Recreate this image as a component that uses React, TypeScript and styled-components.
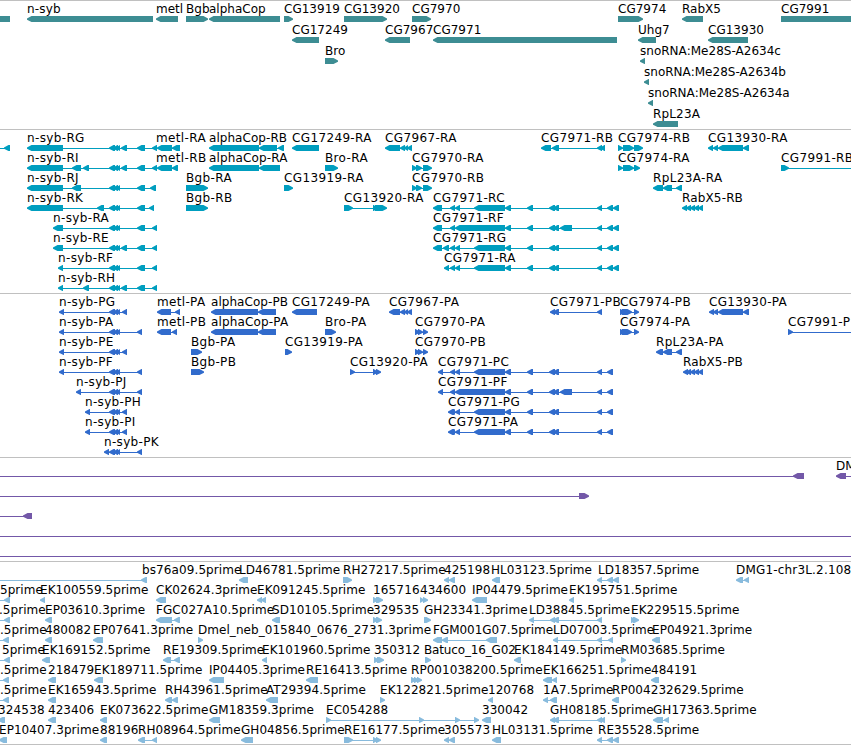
import React from 'react';
import styled, {createGlobalStyle} from 'styled-components';

type Exon = [number, number];
type Strand = '+' | '-';

// label, label offset, strand, exons, optional start / end of the connecting line
interface Feature {
	label: string;
	x: number;
	strand: Strand;
	exons: Exon[];
	from?: number;
	to?: number;
	spacing?: number;
}

interface TrackData {
	name: string;
	color: string;
	gap: number;
	bottom: number;
	spacing: number;
	rows: Feature[][];
}

const GLYPH_HEIGHT = 6;
const HEAD = 4.5;
const OFF_RIGHT = 860;

const f = (label: string, strand: Strand, exons: Exon[], extra: Partial<Feature> = {}): Feature => ({
	label,
	strand,
	exons,
	x: exons.length ? exons[0][0] : 0,
	...extra
});

const mid: Exon[] = [[109, 115], [113, 118], [116, 120]];
const cgTail: Exon[] = [[505, 511], [527, 533], [549, 555], [553, 559]];
const rEnd: Exon[] = [[597, 602], [607, 613], [613, 619]];
const pEnd: Exon[] = [[597, 602], [607, 613]];
const rab: Exon[] = [[686, 691], [690, 695], [694, 699], [698, 703]];
const cg79: Exon[] = [[400, 405], [404, 408], [407, 412]];

const tracks: TrackData[] = [
	{
		name: 'Gene',
		color: '#3d8d93',
		gap: 1,
		bottom: 2,
		spacing: 0.02,
		rows: [
			[
				f('', '-', [[-10, 10]]),
				f('n-syb', '-', [[27, 153]], {spacing: 0.2}),
				f('metl', '-', [[156, 178]]),
				f('Bgb', '+', [[186, 208]]),
				f('alphaCop', '-', [[209, 280]]),
				f('CG13919', '+', [[284, 293]]),
				f('CG13920', '+', [[344, 387]]),
				f('CG7970', '+', [[412, 431]]),
				f('CG7974', '+', [[618, 643]]),
				f('RabX5', '-', [[682, 703]]),
				f('CG7991', '+', [[781, OFF_RIGHT]])
			],
			[
				f('CG17249', '-', [[292, 319]]),
				f('CG7967', '-', [[385, 410]]),
				f('CG7971', '-', [[433, 617]]),
				f('Uhg7', '-', [[638, 656]]),
				f('CG13930', '-', [[708, 748]])
			],
			[f('Bro', '+', [[325, 338]]), f('snoRNA:Me28S-A2634c', '-', [[640, 645]])],
			[f('snoRNA:Me28S-A2634b', '-', [[644, 649]])],
			[f('snoRNA:Me28S-A2634a', '-', [[648, 653]])],
			[f('RpL23A', '-', [[653, 678]], {spacing: 0.15})]
		]
	},
	{
		name: 'mRNA',
		color: '#009ebf',
		gap: 0,
		bottom: 2,
		spacing: 0.36,
		rows: [
			[
				f('', '-', [[4, 10]], {from: -10}),
				f('n-syb-RG', '-', [[27, 63], ...mid, [121, 127], [137, 145], [152, 157]]),
				f('metl-RA', '-', [[157, 172], [172, 180]], {x: 156}),
				f('alphaCop-RB', '-', [[209, 259], [259, 277], [278, 284]], {spacing: 0.05}),
				f('CG17249-RA', '-', [[292, 319]]),
				f('CG7967-RA', '-', [[385, 400], ...cg79]),
				f('CG7971-RB', '-', [[541, 551], [552, 559], [597, 602], [600, 605]]),
				f('CG7974-RB', '+', [[618, 623], [623, 634], [634, 643]]),
				f('CG13930-RA', '-', [[708, 713], [713, 718], [718, 743], [743, 749]])
			],
			[
				f('n-syb-RI', '-', [[27, 63], [72, 81], [83, 89], ...mid, [121, 127], [137, 145], [152, 157]]),
				f('metl-RB', '-', [[157, 172], [172, 178]], {x: 156}),
				f('alphaCop-RA', '-', [[209, 259], [259, 280]], {spacing: 0.15}),
				f('Bro-RA', '+', [[325, 338]]),
				f('CG7970-RA', '+', [[412, 417], [416, 422], [423, 432]]),
				f('CG7974-RA', '+', [[618, 623], [623, 634], [634, 640]]),
				f('CG7991-RB', '+', [[781, 789]], {to: OFF_RIGHT})
			],
			[
				f('n-syb-RJ', '-', [[27, 63], [72, 81], ...mid, [137, 145], [150, 156]]),
				f('Bgb-RA', '+', [[186, 208]]),
				f('CG13919-RA', '+', [[284, 293]]),
				f('CG7970-RB', '+', [[412, 417], [416, 422], [423, 432]]),
				f('RpL23A-RA', '-', [[653, 663], [663, 672], [676, 682]])
			],
			[
				f('n-syb-RK', '-', [[27, 63], [97, 104], ...mid, [137, 145], [149, 154]]),
				f('Bgb-RB', '+', [[186, 208]]),
				f('CG13920-RA', '+', [[344, 353], [373, 378], [375, 387]]),
				f('CG7971-RC', '-', [[433, 442], [450, 455], [455, 460], [474, 505], ...cgTail, ...rEnd]),
				f('RabX5-RB', '-', [[682, 687], ...rab], {spacing: 0.15})
			],
			[
				f('n-syb-RA', '-', [[53, 63], ...mid, [137, 145], [152, 157]]),
				f('CG7971-RF', '-', [[433, 442], [450, 455], [455, 505], ...cgTail, [560, 572], ...rEnd])
			],
			[
				f('n-syb-RE', '-', [[53, 63], ...mid, [121, 127], [137, 145], [152, 157]]),
				f('CG7971-RG', '-', [[433, 442], [443, 449], [450, 455], [455, 460], [474, 505], ...cgTail, ...rEnd])
			],
			[
				f('n-syb-RF', '-', [[58, 63], ...mid, [137, 145], [152, 157]]),
				f('CG7971-RA', '-', [[444, 449], [450, 455], [455, 460], [474, 505], ...cgTail, ...rEnd])
			],
			[f('n-syb-RH', '-', [[58, 63], [83, 89], ...mid, [121, 127], [137, 145], [152, 157]])]
		]
	},
	{
		name: 'CDS',
		color: '#316bcc',
		gap: 0,
		bottom: 2,
		spacing: 0.33,
		rows: [
			[
				f('n-syb-PG', '-', [[59, 64], ...mid, [122, 127]]),
				f('metl-PA', '-', [[157, 171], [175, 180]]),
				f('alphaCop-PB', '-', [[211, 258], [258, 276]], {spacing: 0.05}),
				f('CG17249-PA', '-', [[292, 317]]),
				f('CG7967-PA', '-', [[389, 400], ...cg79]),
				f('CG7971-PB', '-', [[550, 555], [553, 559], [597, 602]]),
				f('CG7974-PB', '+', [[620, 625], [622, 632], [634, 639]]),
				f('CG13930-PA', '-', [[709, 714], [713, 718], [718, 743], [743, 749]])
			],
			[
				f('n-syb-PA', '-', [[59, 64], ...mid, [137, 142]]),
				f('metl-PB', '-', [[157, 171], [172, 177]]),
				f('alphaCop-PA', '-', [[211, 258], [258, 276]], {spacing: 0.15}),
				f('Bro-PA', '+', [[325, 336]]),
				f('CG7970-PA', '+', [[415, 420], [418, 423], [423, 428]]),
				f('CG7974-PA', '+', [[620, 625], [622, 632], [634, 639]]),
				f('CG7991-PB', '+', [[788, 793]], {to: OFF_RIGHT})
			],
			[
				f('n-syb-PE', '-', [[59, 64], ...mid, [122, 127]]),
				f('Bgb-PA', '+', [[191, 202]]),
				f('CG13919-PA', '+', [[285, 292]]),
				f('CG7970-PB', '+', [[415, 420], [418, 423], [423, 428]]),
				f('RpL23A-PA', '-', [[656, 663], [663, 672], [676, 682]])
			],
			[
				f('n-syb-PF', '-', [[59, 64], ...mid, [137, 142]]),
				f('Bgb-PB', '+', [[191, 204]]),
				f('CG13920-PA', '+', [[350, 355], [373, 378], [376, 381]]),
				f('CG7971-PC', '-', [[438, 443], [450, 455], [455, 460], [474, 505], ...cgTail, ...pEnd]),
				f('RabX5-PB', '-', [[683, 688], ...rab], {spacing: 0.15})
			],
			[
				f('n-syb-PJ', '-', [[76, 81], ...mid, [137, 142]]),
				f('CG7971-PF', '-', [[438, 443], [450, 455], [455, 505], ...cgTail, [560, 572], ...pEnd])
			],
			[
				f('n-syb-PH', '-', [[85, 90], ...mid, [122, 127]]),
				f('CG7971-PG', '-', [[448, 454], [451, 455], [455, 460], [474, 505], ...cgTail, ...pEnd])
			],
			[
				f('n-syb-PI', '-', [[85, 90], ...mid, [122, 127]]),
				f('CG7971-PA', '-', [[448, 454], [451, 455], [455, 460], [474, 505], ...cgTail, ...pEnd])
			],
			[f('n-syb-PK', '-', [[104, 109], ...mid, [137, 142]])]
		]
	},
	{
		name: 'BAC',
		color: '#7358a8',
		gap: 0,
		bottom: 2,
		spacing: 0,
		rows: [
			[f('', '-', [[793, 804]], {from: -10}), f('DMG1-chr3L', '-', [[836, 846]], {to: OFF_RIGHT})],
			[f('', '+', [[579, 589]], {from: -10})],
			[f('', '-', [[23, 32]], {from: -10})],
			[f('', '-', [], {from: -10, to: OFF_RIGHT})],
			[f('', '-', [], {from: -10, to: OFF_RIGHT})]
		]
	},
	{
		name: 'EST',
		color: '#88bbdd',
		gap: 0,
		bottom: 1,
		spacing: 0.05,
		rows: [
			[
				f('', '-', [], {from: -10, to: 142}),
				f('bs76a09.5prime', '-', [[141, 147]], {x: 142, spacing: 0.1}),
				f('LD46781.5prime', '-', [[239, 248]]),
				f('RH27217.5prime', '+', [[343, 352]]),
				f('425198', '-', [[444, 449], [449, 455]]),
				f('HL03123.5prime', '-', [[492, 500]], {x: 491}),
				f('LD18357.5prime', '-', rEnd, {x: 598}),
				f('DMG1-chr3L.2.108', '-', [[736, 743], [744, 749]], {spacing: 0.18})
			],
			[
				f('5prime', '-', [[4, 10]], {from: -10, x: 0}),
				f('EK100559.5prime', '-', [[40, 45]]),
				f('CK02624.3prime', '-', [[156, 166]]),
				f('EK091245.5prime', '-', [[257, 262], [261, 266]]),
				f('165716', '+', [[373, 378], [376, 383]], {spacing: 0.15}),
				f('434600', '+', [[420, 424], [423, 428]]),
				f('IP04479.5prime', '-', [[472, 487]]),
				f('EK195751.5prime', '-', [[569, 574]])
			],
			[
				f('.5prime', '-', [[4, 10]], {from: -10, x: -1}),
				f('EP03610.3prime', '-', [[45, 52]]),
				f('FGC027A10.5prime', '-', [[156, 172], [174, 180]]),
				f('SD10105.5prime', '-', [[272, 280]]),
				f('329535', '+', [[373, 378], [376, 382]]),
				f('GH23341.3prime', '+', [[424, 431]]),
				f('LD38845.5prime', '-', [[529, 534], [550, 555], [553, 559], [597, 602]]),
				f('EK229515.5prime', '+', [[631, 636], [633, 639]])
			],
			[
				f('.5prime', '-', [[3, 9]], {from: -10, x: 0}),
				f('480082', '-', [[45, 52]]),
				f('EP07641.3prime', '-', [[93, 103]]),
				f('Dmel_neb_015840_0676_2731.3prime', '+', [[198, 203]]),
				f('FGM001G07.5prime', '-', [[433, 442], [442, 448], [486, 497]], {spacing: -0.02}),
				f('LD07003.5prime', '-', [[553, 558], [597, 602], [608, 613]]),
				f('EP04921.3prime', '-', [[652, 660]])
			],
			[
				f('5prime', '-', [[4, 10]], {from: -10, x: 2}),
				f('EK169152.5prime', '-', [[42, 50]]),
				f('RE19309.5prime', '-', [[163, 171], [174, 180]]),
				f('EK101960.5prime', '-', [[262, 267]]),
				f('350312', '+', [[374, 379], [377, 384]]),
				f('Batuco_16_G02', '+', [[425, 431]], {x: 424, spacing: -0.15}),
				f('EK184149.5prime', '-', [[514, 521]]),
				f('RM03685.5prime', '+', [[621, 626]])
			],
			[
				f('.5prime', '-', [[3, 9]], {from: -10, x: 0}),
				f('218479', '-', [[48, 56]]),
				f('EK189711.5prime', '-', [[94, 103]]),
				f('IP04405.3prime', '-', [[209, 224]]),
				f('RE16413.5prime', '-', [[306, 318]]),
				f('RP001038200.5prime', '+', [[411, 416], [414, 419], [417, 422]]),
				f('EK166251.5prime', '-', [[543, 552], [552, 557]]),
				f('484191', '-', [[651, 659]])
			],
			[
				f('.5prime', '-', [[3, 9]], {from: -10, x: 0}),
				f('EK165943.5prime', '-', [[48, 56]]),
				f('RH43961.5prime', '-', [[165, 172], [172, 178]]),
				f('AT29394.5prime', '-', [[266, 278]]),
				f('EK122821.5prime', '+', [[380, 385]]),
				f('120768', '-', [[488, 493]]),
				f('1A7.5prime', '-', [[543, 548], [550, 557]]),
				f('RP004232629.5prime', '-', [[612, 619]])
			],
			[
				f('324538', '-', [[-2, 5]], {x: -2, spacing: 0.15}),
				f('423406', '-', [[48, 56]]),
				f('EK073622.5prime', '-', [[100, 107]]),
				f('GM18359.3prime', '-', [[209, 220]]),
				f('EC054288', '+', [[326, 331], [419, 424], [455, 460], [474, 479]]),
				f('330042', '-', [[482, 491]]),
				f('GH08185.5prime', '-', [[550, 555], [553, 559], [597, 602], [600, 605]]),
				f('GH17363.5prime', '-', [[653, 663], [664, 669]])
			],
			[
				f('EP10407.3prime', '-', [[-1, 7]]),
				f('88196', '-', [[100, 107]]),
				f('RH08964.5prime', '-', [[138, 145], [152, 157]]),
				f('GH04856.5prime', '-', [[241, 253]]),
				f('RE16177.5prime', '+', [[344, 353], [373, 378], [376, 381]]),
				f('305573', '-', [[444, 449], [449, 455]]),
				f('HL03131.5prime', '-', [[492, 501]]),
				f('RE35528.5prime', '-', rEnd, {x: 598})
			]
		]
	}
];

const GlobalStyle = createGlobalStyle`
	body {
		margin: 0;
		background: #fff;
		overflow: hidden;
	}
`;

const Browser = styled.main`
	display: flex;
	flex-direction: column;
	width: 851px;
	height: 745px;
	overflow: hidden;
	font: 12px/14px 'DejaVu Sans', sans-serif;
	color: #000;
`;

const Track = styled.section<{$color: string; $gap: number; $bottom: number}>`
	display: flex;
	flex-direction: column;
	flex: none;
	gap: ${({$gap}) => $gap}px;
	padding: 1px 0 ${({$bottom}) => $bottom}px;
	border-top: 1px solid #c0c0c0;
	color: ${({$color}) => $color};
`;

const BottomRule = styled.hr`
	flex: none;
	width: 100%;
	height: 1px;
	margin: 0;
	border: 0;
	background: #c0c0c0;
`;

const Row = styled.div`
	display: grid;
	grid-template-columns: 851px;
	grid-template-rows: 14px ${GLYPH_HEIGHT}px;
`;

// every label of a row shares one grid cell and starts at its own feature
const Label = styled.span<{$spacing: number}>`
	grid-area: 1 / 1;
	justify-self: start;
	letter-spacing: ${({$spacing}) => $spacing}px;
	white-space: pre;
	color: #000;
`;

const Glyphs = styled.svg`
	grid-area: 2 / 1;
	display: block;
	width: 851px;
	height: ${GLYPH_HEIGHT}px;
	fill: currentColor;
`;

// the tip is one pixel high so that it runs into the connecting line
const arrow = ([a, b]: Exon, strand: Strand) => {
	const head = Math.min(HEAD, b - a);
	const h = GLYPH_HEIGHT;
	return strand === '-'
		? `M${a} 2.4L${a + head} 0H${b}V${h}H${a + head}L${a} 3.8Z`
		: `M${b} 2.4L${b - head} 0H${a}V${h}H${b - head}L${b} 3.8Z`;
};

const FeatureGlyph = ({feature}: {feature: Feature}) => {
	const {exons, strand} = feature;
	const start = feature.from ?? exons[0][0] + 2;
	const end = feature.to ?? exons[exons.length - 1][1] - 2;
	return (
		<g>
			<rect x={start} y={3} width={end - start} height={1} shapeRendering="crispEdges" />
			{exons.map((exon, i) => <path key={i} d={arrow(exon, strand)} />)}
		</g>
	);
};

const App: React.FunctionComponent = () => (
	<>
		<GlobalStyle />
		<Browser>
			{tracks.map(track => (
				<Track key={track.name} $color={track.color} $gap={track.gap} $bottom={track.bottom}>
					{track.rows.map((row, i) => (
						<Row key={i}>
							{row.filter(({label}) => label).map(({label, x, spacing}) => (
								<Label key={label} $spacing={spacing ?? track.spacing} style={{marginLeft: x}}>
									{label}
								</Label>
							))}
							<Glyphs>
								{row.map((feature, j) => <FeatureGlyph key={j} feature={feature} />)}
							</Glyphs>
						</Row>
					))}
				</Track>
			))}
			<BottomRule />
		</Browser>
	</>
);

export default App;
